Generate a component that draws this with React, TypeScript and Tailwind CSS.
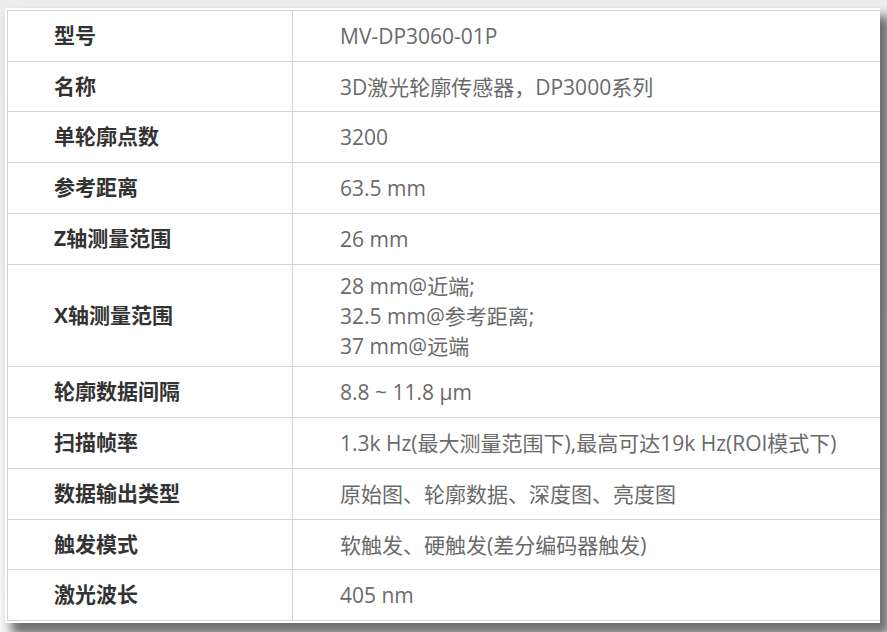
const specs: { label: string; value: string[]; h: string }[] = [
  { label: '型号', value: ['MV-DP3060-01P'], h: 'h-[51px]' },
  { label: '名称', value: ['3D激光轮廓传感器，DP3000系列'], h: 'h-[50px]' },
  { label: '单轮廓点数', value: ['3200'], h: 'h-[51px]' },
  { label: '参考距离', value: ['63.5 mm'], h: 'h-[51px]' },
  { label: 'Z轴测量范围', value: ['26 mm'], h: 'h-[51px]' },
  {
    label: 'X轴测量范围',
    value: ['28 mm@近端;', '32.5 mm@参考距离;', '37 mm@远端'],
    h: 'h-[102px]',
  },
  { label: '轮廓数据间隔', value: ['8.8 ~ 11.8 μm'], h: 'h-[51px]' },
  { label: '扫描帧率', value: ['1.3k Hz(最大测量范围下),最高可达19k Hz(ROI模式下)'], h: 'h-[51px]' },
  { label: '数据输出类型', value: ['原始图、轮廓数据、深度图、亮度图'], h: 'h-[51px]' },
  { label: '触发模式', value: ['软触发、硬触发(差分编码器触发)'], h: 'h-[50px]' },
  { label: '激光波长', value: ['405 nm'], h: 'h-[51px]' },
];

export default function App() {
  return (
    <div
      className="w-[887px] h-[632px] overflow-hidden bg-gradient-to-b from-[#ededed] to-[#f7f7f7] pl-[5px] pt-[8px]"
      style={{ fontFamily: '"Open Sans", "Noto Sans CJK SC", sans-serif' }}
    >
      <div className="w-[875px] bg-white p-[2px] pr-0 shadow-[8px_10px_10px_2px_rgba(0,0,0,0.55)]">
        <div className="border-t border-l border-[#d2d2d2]">
          {specs.map((row) => (
            <div key={row.label} className={`flex border-b border-[#d2d2d2] ${row.h}`}>
              <div className="w-[285px] shrink-0 flex items-center pl-[46px] border-r border-[#d2d2d2] text-[21px] font-bold text-[#333333]">
                {row.label}
              </div>
              <div className="flex-1 flex flex-col justify-center pl-[47px] text-[21px] leading-[30px] text-[#6a6a6a]">
                {row.value.map((v) => (
                  <span key={v}>{v}</span>
                ))}
              </div>
            </div>
          ))}
        </div>
      </div>
    </div>
  );
}
